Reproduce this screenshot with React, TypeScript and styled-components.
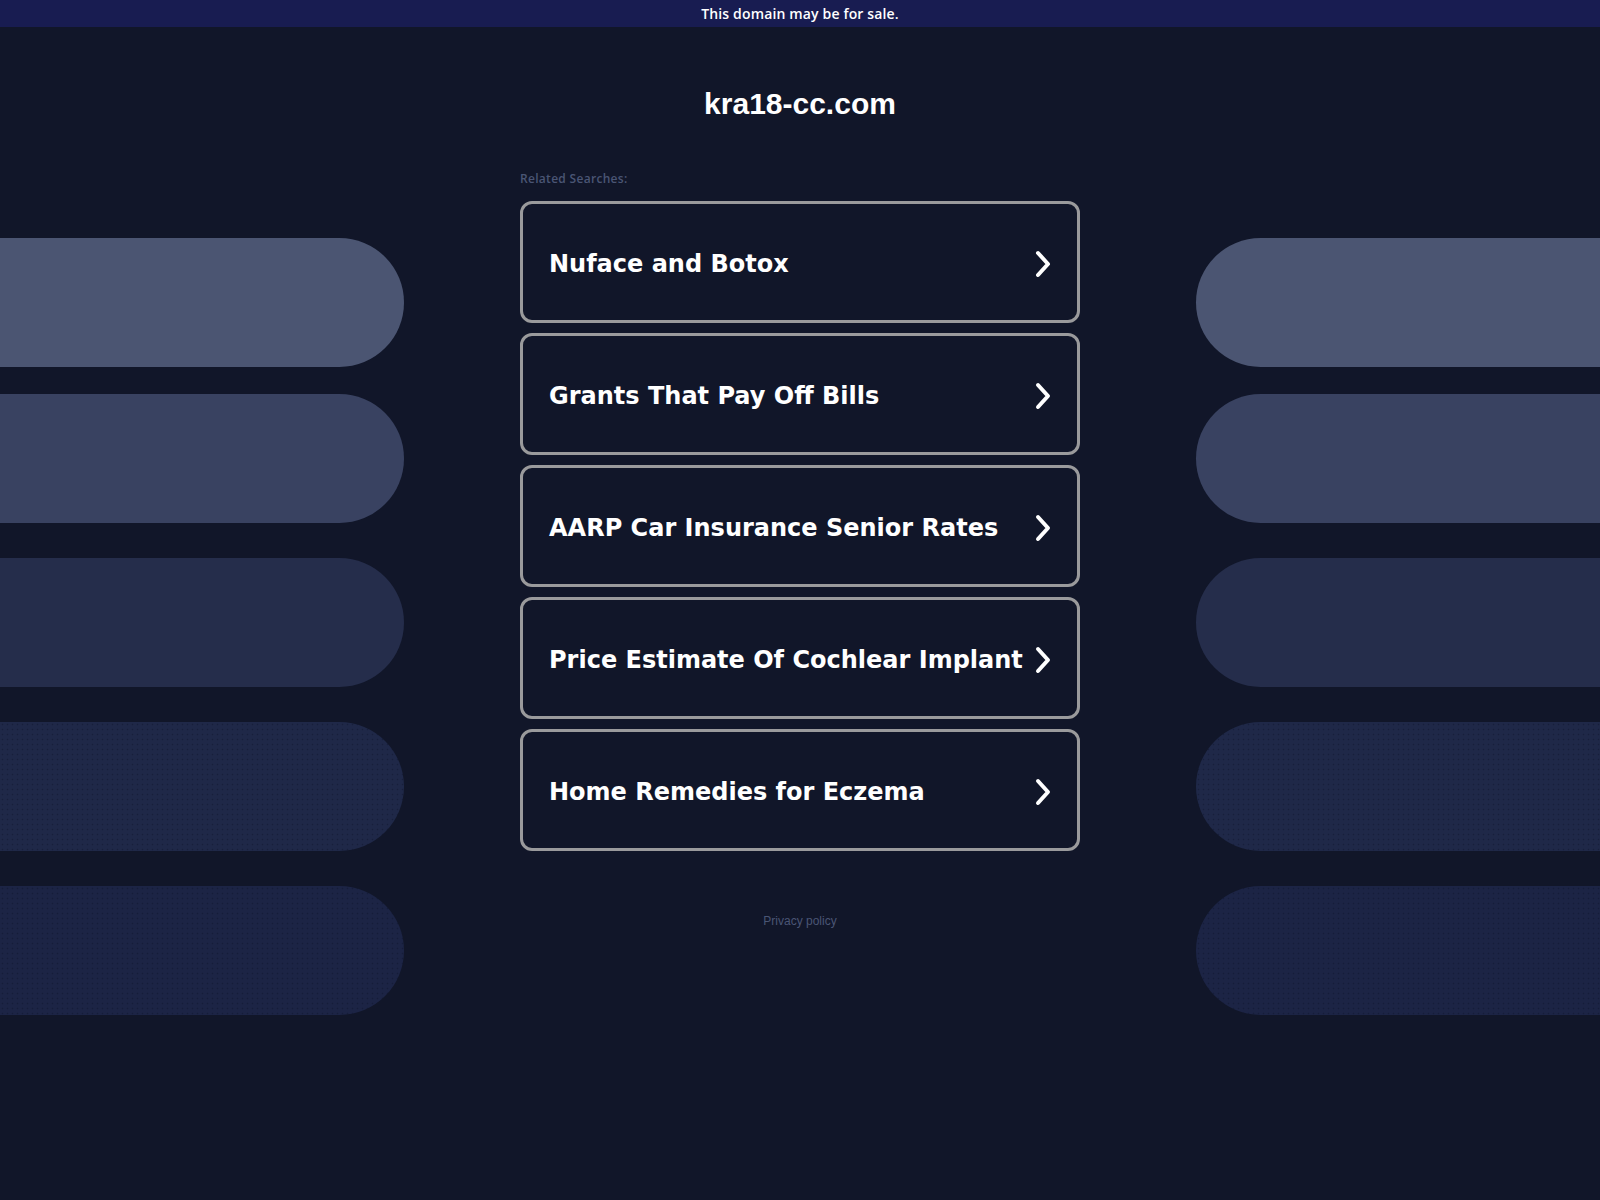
import * as React from 'react';
import styled, { createGlobalStyle } from 'styled-components';

const GlobalStyle = createGlobalStyle`
    html, body {
        margin: 0;
        padding: 0;
        background: #111629;
    }
    * {
        box-sizing: border-box;
    }
`;

const Page = styled.div`
    min-height: 1200px;
    background: #111629;
    font-family: "Open Sans", "DejaVu Sans", sans-serif;
`;

const Banner = styled.div`
    height: 27px;
    display: flex;
    justify-content: center;
    align-items: center;
    background: #181c51;
    color: #ffffff;
    font-size: 14px;
    font-weight: 600;
    letter-spacing: 0.15px;
`;

const Stage = styled.div`
    display: grid;
    grid-template-columns: 1fr 560px 1fr;
    column-gap: 116px;
`;

const Side = styled.div<{ $side: 'left' | 'right' }>`
    display: flex;
    flex-direction: column;
    padding-top: 211px;
    align-items: ${props => props.$side === 'left' ? 'flex-end' : 'flex-start'};
`;

const Pill = styled.div<{ $side: 'left' | 'right'; $tone: string; $dotted?: boolean; $gap: number }>`
    width: 100%;
    height: 129px;
    margin-bottom: ${props => props.$gap}px;
    background-color: ${props => props.$tone};
    background-image: ${props => props.$dotted
        ? 'radial-gradient(circle, rgba(12, 18, 40, 0.4) 0.7px, transparent 1.1px)'
        : 'none'};
    background-size: 5px 5px;
    border-radius: ${props => props.$side === 'left' ? '0 65px 65px 0' : '65px 0 0 65px'};
`;

const Center = styled.div`
    display: flex;
    flex-direction: column;
`;

const Title = styled.h1`
    margin: 0;
    padding-top: 59px;
    text-align: center;
    color: #ffffff;
    font-family: "Liberation Sans", Arial, sans-serif;
    font-size: 30px;
    font-weight: 700;
    line-height: 36px;
`;

const Caption = styled.div`
    margin-top: 49px;
    color: #4a5574;
    font-size: 12px;
    font-weight: 600;
    letter-spacing: 0.3px;
    line-height: 16px;
`;

const Links = styled.ul`
    list-style: none;
    margin: 14px 0 0;
    padding: 0;
    display: flex;
    flex-direction: column;
    gap: 10px;
`;

const LinkCard = styled.li`
    height: 122px;
    display: flex;
    align-items: center;
    justify-content: space-between;
    padding: 3px 24px 0 26px;
    border: 3px solid #9a9a9c;
    border-radius: 12px;
    color: #ffffff;
    font-family: "DejaVu Sans", Verdana, sans-serif;
    font-size: 24px;
    font-weight: 700;
    cursor: pointer;
`;

const Chevron = () => (
    <svg width="20" height="30" viewBox="0 0 20 30" fill="none">
        <path d="M5 4 L15 15 L5 26" stroke="#ffffff" strokeWidth="4" strokeLinecap="round" strokeLinejoin="round" />
    </svg>
);

const Footer = styled.div`
    margin-top: 63px;
    text-align: center;
    color: #4a5574;
    font-family: "Liberation Sans", Arial, sans-serif;
    font-size: 12px;
`;

const searches = [
    'Nuface and Botox',
    'Grants That Pay Off Bills',
    'AARP Car Insurance Senior Rates',
    'Price Estimate Of Cochlear Implant',
    'Home Remedies for Eczema',
];

const pills = [
    { tone: '#4b5572', gap: 27 },
    { tone: '#394261', gap: 35 },
    { tone: '#252d4b', gap: 35 },
    { tone: '#1f2848', gap: 35, dotted: true },
    { tone: '#1c2445', gap: 0, dotted: true },
];

const App = () => {
    return (
        <Page>
            <GlobalStyle />
            <Banner>This domain may be for sale.</Banner>
            <Stage>
                <Side $side="left">
                    {pills.map((p, i) => (
                        <Pill key={i} $side="left" $tone={p.tone} $gap={p.gap} $dotted={p.dotted} />
                    ))}
                </Side>
                <Center>
                    <Title>kra18-cc.com</Title>
                    <Caption>Related Searches:</Caption>
                    <Links>
                        {searches.map(s => (
                            <LinkCard key={s}>
                                <span>{s}</span>
                                <Chevron />
                            </LinkCard>
                        ))}
                    </Links>
                    <Footer>Privacy policy</Footer>
                </Center>
                <Side $side="right">
                    {pills.map((p, i) => (
                        <Pill key={i} $side="right" $tone={p.tone} $gap={p.gap} $dotted={p.dotted} />
                    ))}
                </Side>
            </Stage>
        </Page>
    );
};

export default App;
